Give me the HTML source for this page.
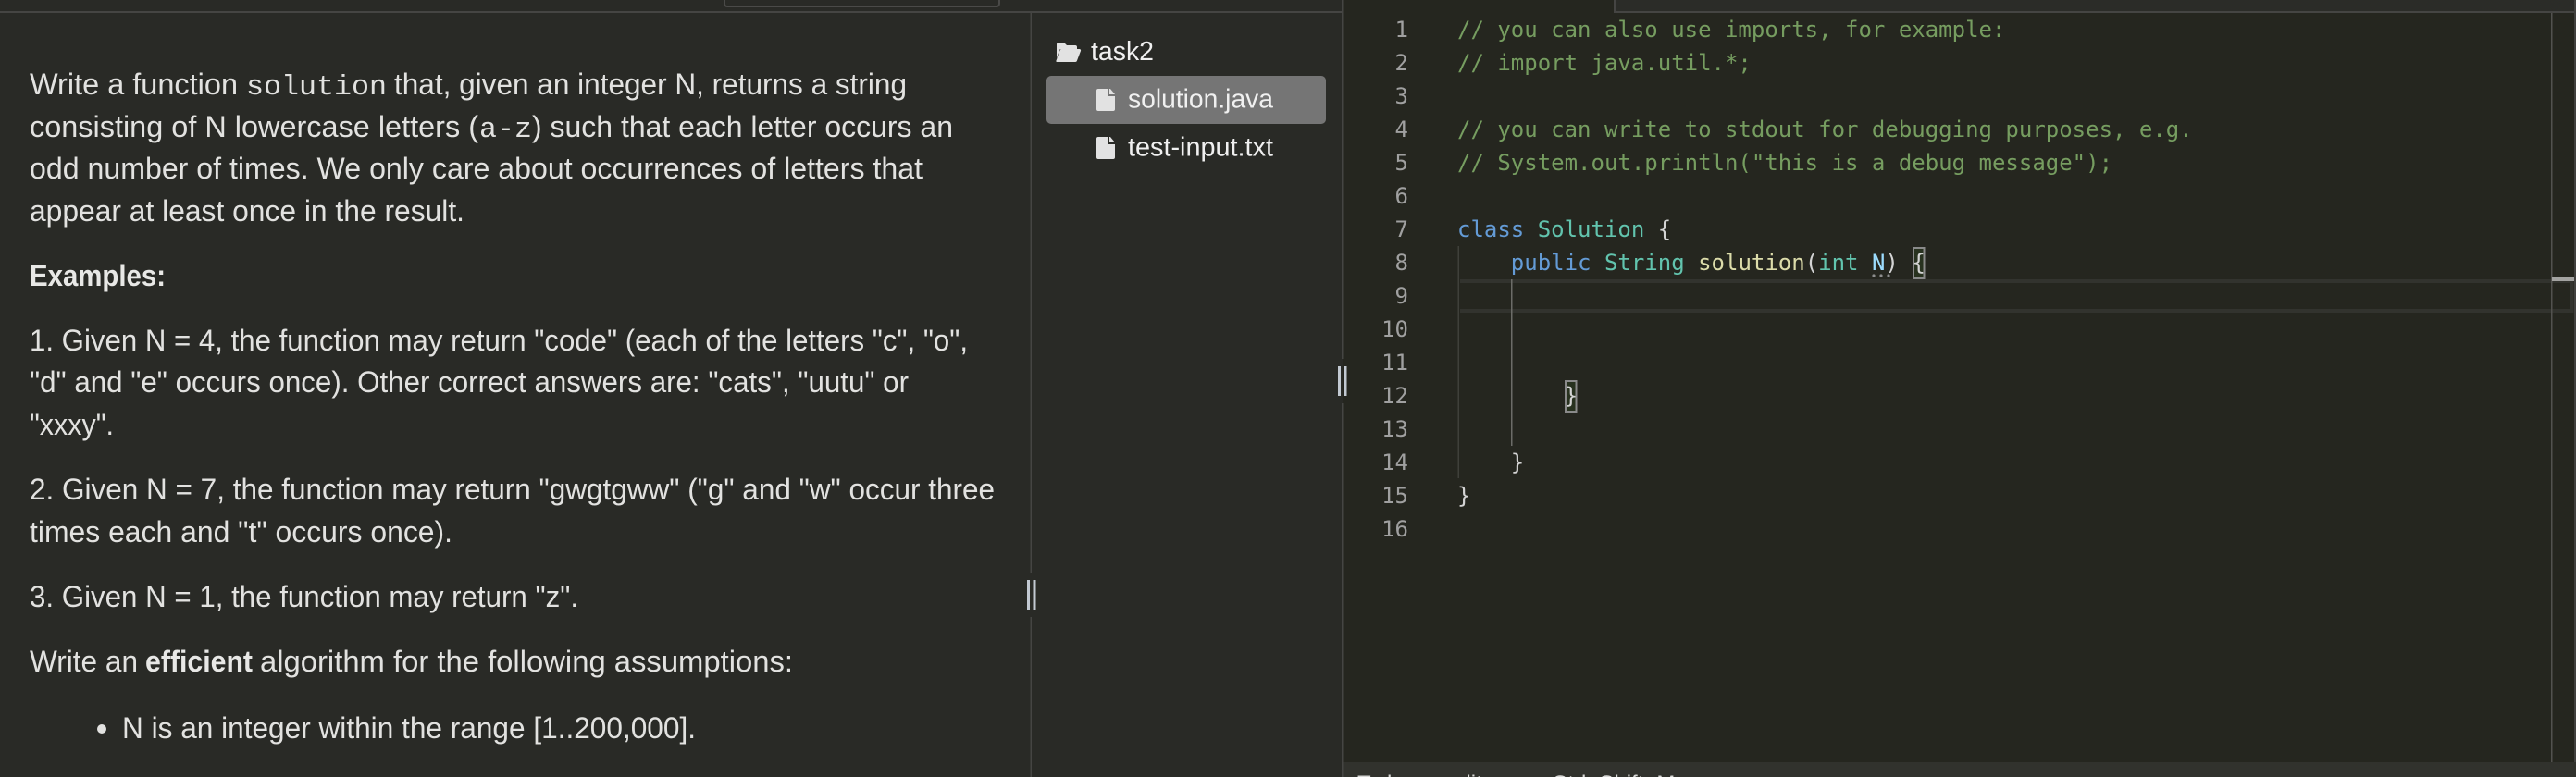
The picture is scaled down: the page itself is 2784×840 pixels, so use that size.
<!DOCTYPE html>
<html lang="en">
<head>
<meta charset="utf-8">
<title>task2 - solution.java</title>
<style>
html,body{margin:0;padding:0;width:2784px;height:840px;overflow:hidden;background:#292a26}
svg{display:block;position:absolute;left:0;top:0}
.t{font-family:"Liberation Sans",sans-serif;font-size:32px;fill:#e2e2e0}
.b{font-weight:700;fill:#e8e8e6}
.m{font-family:"Liberation Mono",monospace;font-size:31px;fill:#e2e2e0}
.f{font-family:"Liberation Sans",sans-serif;font-size:29px;fill:#f0f0f0}
.c{font-family:"DejaVu Sans Mono",monospace;font-size:24px;fill:#d4d4d4;white-space:pre}
.n{fill:#a0a0a0}
.g{fill:#769d60}
.k{fill:#649bd6}
.y{fill:#62c4ae}
.u{fill:#dcdcaa}
.p{fill:#9cdcfe}
</style>
</head>
<body>
<svg width="2784" height="840" viewBox="0 0 2784 840" xmlns="http://www.w3.org/2000/svg">
<!-- panels -->
<rect x="0" y="0" width="2784" height="840" fill="#292a26"/>
<rect x="1451" y="0" width="1333" height="824" fill="#25261f"/>
<rect x="1746" y="0" width="1038" height="12" fill="#2b2c28"/>
<rect x="1451" y="824" width="1333" height="16" fill="#31322d"/>
<!-- top borders -->
<rect x="0" y="12" width="1451" height="2" fill="#454543"/>
<rect x="1744" y="12" width="1040" height="2" fill="#454543"/>
<rect x="1744" y="0" width="2" height="13" fill="#454543"/>
<path d="M783 0v4a3 3 0 0 0 3 3h291a3 3 0 0 0 3-3V0" fill="none" stroke="#4a4a48" stroke-width="2"/>
<!-- dividers -->
<rect x="1113.500" y="13" width="1.500" height="606" fill="#454543"/>
<rect x="1113.500" y="667" width="1.500" height="173" fill="#454543"/>
<rect x="1450" y="0" width="1.500" height="388" fill="#454543"/>
<rect x="1450" y="436" width="1.500" height="404" fill="#454543"/>
<!-- split handles -->
<rect x="1110" y="627" width="3" height="32" fill="#c2c9d2"/>
<rect x="1116.500" y="627" width="3" height="32" fill="#c2c9d2"/>
<rect x="1446" y="396" width="3" height="32" fill="#c2c9d2"/>
<rect x="1452.500" y="396" width="3" height="32" fill="#c2c9d2"/>

<!-- description -->
<text class="t" x="32" y="102" textLength="225" lengthAdjust="spacingAndGlyphs">Write a function</text>
<text class="m" x="266" y="102" textLength="152" lengthAdjust="spacingAndGlyphs">solution</text>
<text class="t" x="426" y="102" textLength="554" lengthAdjust="spacingAndGlyphs">that, given an integer N, returns a string</text>

<text class="t" x="32" y="148" textLength="485" lengthAdjust="spacingAndGlyphs">consisting of N lowercase letters (</text>
<text class="m" x="518" y="148" textLength="57" lengthAdjust="spacingAndGlyphs">a-z</text>
<text class="t" x="575" y="148" textLength="455" lengthAdjust="spacingAndGlyphs">) such that each letter occurs an</text>

<text class="t" x="32" y="193" textLength="965" lengthAdjust="spacingAndGlyphs">odd number of times. We only care about occurrences of letters that</text>
<text class="t" x="32" y="239" textLength="470" lengthAdjust="spacingAndGlyphs">appear at least once in the result.</text>

<text class="t b" x="32" y="309" textLength="147" lengthAdjust="spacingAndGlyphs">Examples:</text>

<text class="t" x="32" y="379" textLength="1014" lengthAdjust="spacingAndGlyphs">1. Given N = 4, the function may return "code" (each of the letters "c", "o",</text>
<text class="t" x="32" y="424" textLength="950" lengthAdjust="spacingAndGlyphs">"d" and "e" occurs once). Other correct answers are: "cats", "uutu" or</text>
<text class="t" x="32" y="470" textLength="91" lengthAdjust="spacingAndGlyphs">"xxxy".</text>

<text class="t" x="32" y="540" textLength="1043" lengthAdjust="spacingAndGlyphs">2. Given N = 7, the function may return "gwgtgww" ("g" and "w" occur three</text>
<text class="t" x="32" y="586" textLength="457" lengthAdjust="spacingAndGlyphs">times each and "t" occurs once).</text>

<text class="t" x="32" y="656" textLength="593" lengthAdjust="spacingAndGlyphs">3. Given N = 1, the function may return "z".</text>

<text class="t" x="32" y="726" textLength="117" lengthAdjust="spacingAndGlyphs">Write an</text>
<text class="t b" x="157" y="726" textLength="116" lengthAdjust="spacingAndGlyphs">efficient</text>
<text class="t" x="281" y="726" textLength="576" lengthAdjust="spacingAndGlyphs">algorithm for the following assumptions:</text>

<circle cx="110" cy="788" r="5" fill="#e2e2e0"/>
<text class="t" x="132" y="798" textLength="620" lengthAdjust="spacingAndGlyphs">N is an integer within the range [1..200,000].</text>

<!-- file tree -->
<rect x="1131" y="82" width="302" height="52" rx="5" fill="#757575"/>
<path d="M1142 63V48a2 2 0 0 1 2-2h6l3 3h9a2 2 0 0 1 2 2v2h-17a2 2 0 0 0-2 1z" fill="#e2e2e2"/>
<path d="M1147 53h19.500a1.500 1.500 0 0 1 1.500 2l-4 10.500a2 2 0 0 1-2 1.500h-19.500a1 1 0 0 1-1-1.500l4-11a2 2 0 0 1 2-1.500z" fill="#e2e2e2"/>
<text class="f" x="1179" y="65" textLength="68" lengthAdjust="spacingAndGlyphs">task2</text>

<path d="M1187 96h10v8h8v14a2 2 0 0 1-2 2h-16a2 2 0 0 1-2-2v-20a2 2 0 0 1 2-2z" fill="#e2e2e2"/>
<path d="M1199 96h1l5 6h-6z" fill="#e2e2e2"/>
<text class="f" x="1219" y="116.500" textLength="157" lengthAdjust="spacingAndGlyphs">solution.java</text>

<path d="M1187 148h10v8h8v14a2 2 0 0 1-2 2h-16a2 2 0 0 1-2-2v-20a2 2 0 0 1 2-2z" fill="#e2e2e2"/>
<path d="M1199 148h1l5 6h-6z" fill="#e2e2e2"/>
<text class="f" x="1219" y="168.500" textLength="157" lengthAdjust="spacingAndGlyphs">test-input.txt</text>

<!-- current line -->
<path d="M1578 304H2779.500V336H1578" fill="none" stroke="#32332e" stroke-width="4"/>

<!-- indent guides -->
<rect x="1575.500" y="266" width="1.500" height="251" fill="#3f403a"/>
<rect x="1633" y="302" width="1.500" height="180" fill="#6c6c68"/>

<!-- bracket match boxes -->
<rect x="2068" y="268" width="11.500" height="33" fill="#28321f" stroke="#8a8a8a" stroke-width="2"/>
<rect x="1692" y="412" width="11.500" height="33" fill="#28321f" stroke="#8a8a8a" stroke-width="2"/>

<!-- line numbers -->
<g text-anchor="end">
<text class="c n" x="1522" y="40">1</text>
<text class="c n" x="1522" y="76">2</text>
<text class="c n" x="1522" y="112">3</text>
<text class="c n" x="1522" y="148">4</text>
<text class="c n" x="1522" y="184">5</text>
<text class="c n" x="1522" y="220">6</text>
<text class="c n" x="1522" y="256">7</text>
<text class="c n" x="1522" y="292">8</text>
<text class="c n" x="1522" y="328">9</text>
<text class="c n" x="1522" y="364">10</text>
<text class="c n" x="1522" y="400">11</text>
<text class="c n" x="1522" y="436">12</text>
<text class="c n" x="1522" y="472">13</text>
<text class="c n" x="1522" y="508">14</text>
<text class="c n" x="1522" y="544">15</text>
<text class="c n" x="1522" y="580">16</text>
</g>

<!-- code -->
<g transform="translate(-1 0)">
<text class="c g" x="1576" y="40">// you can also use imports, for example:</text>
<text class="c g" x="1576" y="76">// import java.util.*;</text>
<text class="c g" x="1576" y="148">// you can write to stdout for debugging purposes, e.g.</text>
<text class="c g" x="1576" y="184">// System.out.println("this is a debug message");</text>
<text class="c" x="1576" y="256" xml:space="preserve"><tspan class="k">class</tspan> <tspan class="y">Solution</tspan> {</text>
<text class="c" x="1576" y="292" xml:space="preserve">    <tspan class="k">public</tspan> <tspan class="y">String</tspan> <tspan class="u">solution</tspan>(<tspan class="y">int</tspan> <tspan class="p">N</tspan>) {</text>
<text class="c" x="1576" y="436" xml:space="preserve">        }</text>
<text class="c" x="1576" y="508" xml:space="preserve">    }</text>
<text class="c" x="1576" y="544">}</text>
</g>

<!-- hint dots under N -->
<circle cx="2025" cy="298" r="1.600" fill="#8d8d8d"/>
<circle cx="2033" cy="298" r="1.600" fill="#8d8d8d"/>
<circle cx="2041" cy="298" r="1.600" fill="#8d8d8d"/>

<!-- overview ruler -->
<rect x="2757" y="14" width="1.500" height="810" fill="#52524f"/>
<rect x="2758" y="300" width="24" height="4" fill="#a3a3a1"/>
<rect x="2782" y="0" width="2" height="824" fill="#41413f"/>

<!-- status line, clipped at page bottom -->
<text x="1467" y="855" font-family="'Liberation Sans',sans-serif" font-size="24" fill="#d8d8d6">To leave editor:</text>
<text x="1677" y="855" font-family="'Liberation Sans',sans-serif" font-size="24" fill="#d8d8d6">Ctrl+Shift+M</text>
</svg>
</body>
</html>
